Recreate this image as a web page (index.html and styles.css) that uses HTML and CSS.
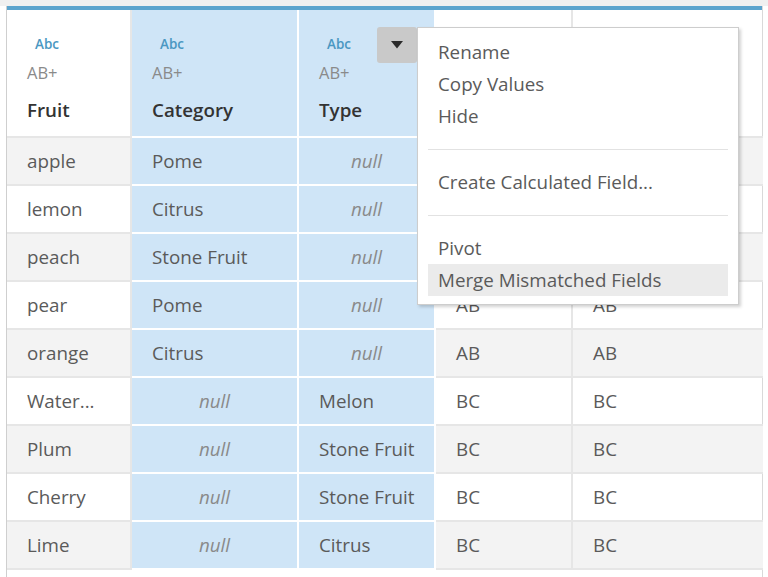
FILE: index.html
```html
<!DOCTYPE html>
<html>

<head>
    <title>Data Source</title>
    <meta charset="utf-8">
    <meta name="viewport" content="width=device-width, initial-scale=1.0">
    <link rel="stylesheet" href="styles.css">
</head>

<body>

    <div class="topstrip"></div>

    <section class="sheet">
        <div class="accent"></div>

        <div class="grid">
            <!-- header -->
            <div class="cell head">
                <div class="type">Abc</div>
                <div class="role">AB+</div>
                <div class="name">Fruit</div>
            </div>
            <div class="cell head blue">
                <div class="type">Abc</div>
                <div class="role">AB+</div>
                <div class="name">Category</div>
            </div>
            <div class="cell head blue">
                <div class="type">Abc</div>
                <div class="role">AB+</div>
                <div class="name">Type</div>
                <button class="drop">
                    <svg width="12" height="8" viewBox="0 0 12 8"><polygon points="0,0 12,0 6,7.5" fill="#2b2b2b" /></svg>
                </button>
            </div>
            <div class="cell head"></div>
            <div class="cell head last"></div>

            <!-- rows -->
            <div class="cell alt">apple</div>
            <div class="cell blue">Pome</div>
            <div class="cell blue null">null</div>
            <div class="cell alt">AB</div>
            <div class="cell alt last">AB</div>

            <div class="cell">lemon</div>
            <div class="cell blue">Citrus</div>
            <div class="cell blue null">null</div>
            <div class="cell">AB</div>
            <div class="cell last">AB</div>

            <div class="cell alt">peach</div>
            <div class="cell blue">Stone Fruit</div>
            <div class="cell blue null">null</div>
            <div class="cell alt">AB</div>
            <div class="cell alt last">AB</div>

            <div class="cell">pear</div>
            <div class="cell blue">Pome</div>
            <div class="cell blue null">null</div>
            <div class="cell">AB</div>
            <div class="cell last">AB</div>

            <div class="cell alt">orange</div>
            <div class="cell blue">Citrus</div>
            <div class="cell blue null">null</div>
            <div class="cell alt">AB</div>
            <div class="cell alt last">AB</div>

            <div class="cell">Water...</div>
            <div class="cell blue null">null</div>
            <div class="cell blue">Melon</div>
            <div class="cell">BC</div>
            <div class="cell last">BC</div>

            <div class="cell alt">Plum</div>
            <div class="cell blue null">null</div>
            <div class="cell blue">Stone Fruit</div>
            <div class="cell alt">BC</div>
            <div class="cell alt last">BC</div>

            <div class="cell">Cherry</div>
            <div class="cell blue null">null</div>
            <div class="cell blue">Stone Fruit</div>
            <div class="cell">BC</div>
            <div class="cell last">BC</div>

            <div class="cell alt">Lime</div>
            <div class="cell blue null">null</div>
            <div class="cell blue">Citrus</div>
            <div class="cell alt">BC</div>
            <div class="cell alt last">BC</div>
        </div>

        <ul class="menu">
            <li>Rename</li>
            <li>Copy Values</li>
            <li>Hide</li>
            <li class="sep"></li>
            <li>Create Calculated Field...</li>
            <li class="sep"></li>
            <li>Pivot</li>
            <li class="hover">Merge Mismatched Fields</li>
        </ul>
    </section>

</body>

</html>
```

FILE: styles.css
```css
* {
    box-sizing: border-box;
}

body {
    margin: 0;
    background: white;
    font-family: "Open Sans", sans-serif;
    font-size: 18.8px;
    color: #5a5a5a;
}

.topstrip {
    height: 6px;
    background: #f0f0f0;
}

.sheet {
    position: relative;
    width: 757px;
    height: 571px;
    margin-left: 6px;
    border-left: 1px solid #cfcfcf;
    border-right: 1px solid #d9d9d9;
}

.accent {
    height: 4px;
    background: #5ca4cd;
}

.grid {
    display: grid;
    grid-template-columns: 125px 167px 137px 137px 190px;
}

.cell {
    height: 48px;
    padding: 0 20px;
    display: flex;
    align-items: center;
    white-space: nowrap;
    border-right: 2px solid #e6e6e6;
    border-bottom: 2px solid #e6e6e6;
}

.cell.last {
    border-right: 0;
}

.alt {
    background: #f3f3f3;
}

.blue {
    background: #cfe5f7;
    border-color: white;
}

.null {
    justify-content: center;
    font-style: italic;
    color: #8a8a8a;
}

.head {
    position: relative;
    height: 128px;
    display: block;
    padding-top: 26px;
}

.head .type {
    padding-left: 8px;
    font-size: 13.5px;
    font-weight: 600;
    line-height: 16px;
    color: #4a97c2;
}

.head .role {
    margin-top: 11px;
    font-size: 16.5px;
    line-height: 20px;
    color: #8a8a8a;
}

.head .name {
    margin-top: 15px;
    font-weight: 600;
    line-height: 24px;
    color: #333;
}

.drop {
    position: absolute;
    left: 78px;
    top: 17px;
    width: 40px;
    height: 36px;
    border: 0;
    border-radius: 3px;
    background: #c9c9c9;
    padding: 0;
    display: flex;
    align-items: center;
    justify-content: center;
}

.menu {
    position: absolute;
    left: 410px;
    top: 21px;
    width: 322px;
    margin: 0;
    padding: 8px 10px;
    list-style: none;
    background: white;
    border: 1px solid #cdcdcd;
    box-shadow: 2px 2px 3px rgba(0, 0, 0, 0.18);
}

.menu li {
    height: 32px;
    line-height: 32px;
    padding-left: 10px;
    white-space: nowrap;
}

.menu .sep {
    height: 1px;
    margin: 17px 0 16px;
    background: #e2e2e2;
}

.menu .hover {
    background: #ebebeb;
}
```
